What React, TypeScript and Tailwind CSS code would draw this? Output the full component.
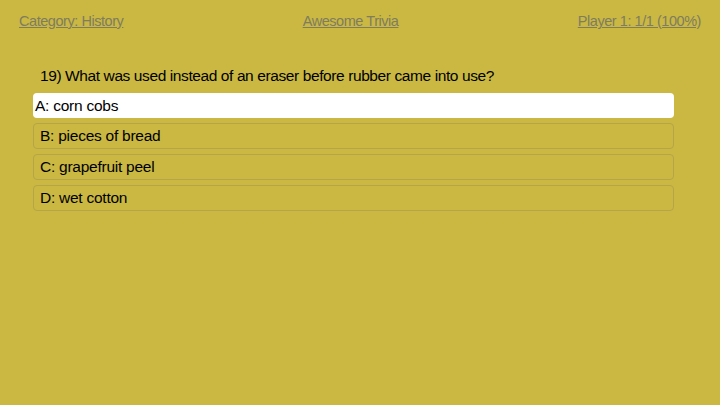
export default function App() {
  const options = ["B: pieces of bread", "C: grapefruit peel", "D: wet cotton"];

  return (
    <div
      className="w-[720px] h-[405px] bg-[#cab843] text-black"
      style={{ fontFamily: '"Liberation Sans", Arial, sans-serif' }}
    >
      {/* header */}
      <div className="flex justify-between items-center px-[19px] pt-[11px] text-[14.5px] leading-[20px] tracking-[-0.45px] text-[#807c5e]">
        <span className="underline">Category: History</span>
        <span className="underline">Awesome Trivia</span>
        <span className="underline">Player 1: 1/1 (100%)</span>
      </div>

      <div className="pl-[33px] pr-[46px] pt-[35px]">
        <div className="pl-[7px] text-[15.5px] leading-[20px] tracking-[-0.4px] mb-[7px]">
          19) What was used instead of an eraser before rubber came into use?
        </div>

        <div className="flex flex-col gap-[5px] text-[15.5px] tracking-[-0.25px]">
          <div className="h-[25px] bg-white rounded-[4px] pl-[2px] flex items-center">
            A: corn cobs
          </div>
          {options.map((o) => (
            <div
              key={o}
              className="h-[26px] border border-[#b3a548] rounded-[4px] pl-[6px] flex items-center"
            >
              {o}
            </div>
          ))}
        </div>
      </div>
    </div>
  );
}
